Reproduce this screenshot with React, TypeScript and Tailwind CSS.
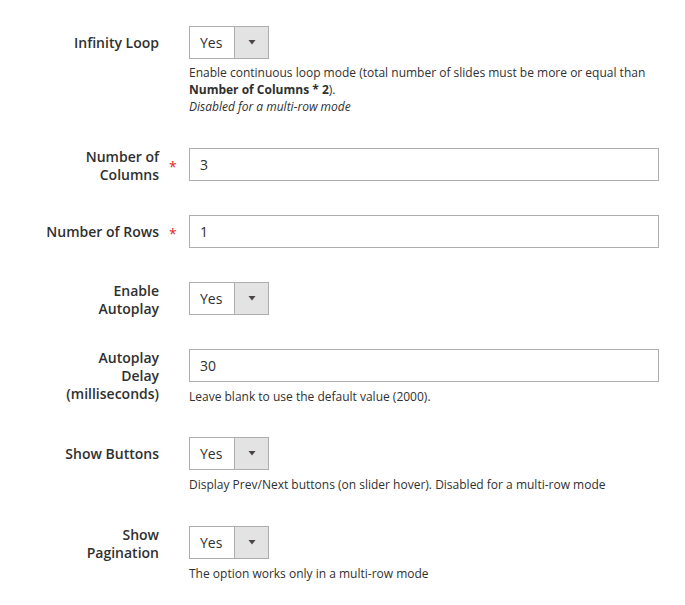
import React from "react";

// Magento-style admin config form (slider settings)

const Select = ({ value }: { value: string }) => (
  <div className="flex h-[33px] w-[80px] border border-[#adadad] bg-white">
    <div className="flex flex-1 items-center pl-[10px] text-[14px] text-[#303030]">{value}</div>
    <div className="flex w-[34px] items-center justify-center border-l border-[#adadad] bg-[#e3e3e3]">
      <svg width="8" height="5" viewBox="0 0 8 5" className="-mt-[1px]">
        <path d="M0.5 0 H7.5 L4 4.5 Z" fill="#4a4542" />
      </svg>
    </div>
  </div>
);

const Input = ({ value }: { value: string }) => (
  <div className="flex h-[33px] w-[470px] items-center border border-[#adadad] bg-white pl-[10px] text-[14px] text-[#303030]">
    {value}
  </div>
);

const Note = ({ children }: { children: React.ReactNode }) => (
  <div className="mt-[6px] text-[12px] leading-[17px] text-[#303030]">{children}</div>
);

type RowProps = {
  label: React.ReactNode;
  multi?: boolean;
  required?: boolean;
  className?: string;
  children: React.ReactNode;
};

const Row = ({ label, multi, required, className, children }: RowProps) => (
  <div className={"flex items-start " + (className || "")}>
    <label
      className={
        "w-[159px] text-right text-[14px] font-semibold leading-[18px] text-[#303030] " +
        (multi ? "pt-0" : "pt-[8px]")
      }
    >
      {label}
    </label>
    <div className="w-[30px] pl-[10px] pt-[10px] text-[14px] leading-[18px] text-[#e22626]">
      {required ? "*" : ""}
    </div>
    <div className="w-[470px]">{children}</div>
  </div>
);

const App = () => {
  return (
    <div
      className="min-h-screen bg-white pt-[26px]"
      style={{ fontFamily: '"Open Sans", "Noto Sans", sans-serif' }}
    >
      <Row label="Infinity Loop" className="mb-[33px]">
        <Select value="Yes" />
        <div className="mt-[5px] text-[12px] leading-[17px] text-[#303030]">
          Enable continuous loop mode (total number of slides must be more or equal than
          <br />
          <span className="font-bold">Number of Columns * 2</span>).
          <br />
          <span className="italic">Disabled for a multi-row mode</span>
        </div>
      </Row>

      <Row label={<>Number of<br />Columns</>} multi required className="mb-[31px]">
        <Input value="3" />
      </Row>

      <Row label="Number of Rows" required className="mb-[34px]">
        <Input value="1" />
      </Row>

      <Row label={<>Enable<br />Autoplay</>} multi className="mb-[31px]">
        <Select value="Yes" />
      </Row>

      <Row label={<>Autoplay<br />Delay<br />(milliseconds)</>} multi className="mb-[32px]">
        <Input value="30" />
        <Note>Leave blank to use the default value (2000).</Note>
      </Row>

      <Row label="Show Buttons" className="mb-[33px]">
        <Select value="Yes" />
        <Note>Display Prev/Next buttons (on slider hover). Disabled for a multi-row mode</Note>
      </Row>

      <Row label={<>Show<br />Pagination</>} multi>
        <Select value="Yes" />
        <Note>The option works only in a multi-row mode</Note>
      </Row>
    </div>
  );
};

export default App;
